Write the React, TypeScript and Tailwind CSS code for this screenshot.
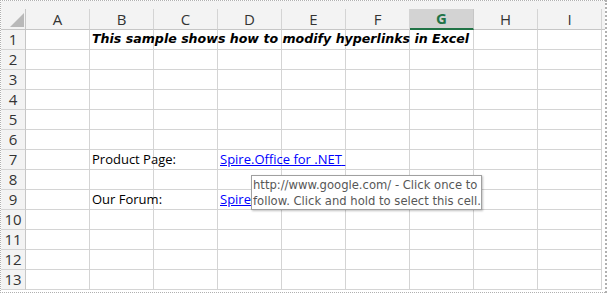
import React from "react";

const cols = ["A", "B", "C", "D", "E", "F", "G", "H", "I"];
const rows = Array.from({ length: 13 }, (_, i) => i + 1);

const cellFont = { fontFamily: '"Open Sans", "Liberation Sans", sans-serif' };

function CellContent({ r, c }: { r: number; c: number }) {
  if (r === 1 && c === 1)
    return (
      <span
        className="relative whitespace-nowrap text-[12.6px] font-bold italic text-black z-10"
        style={{ fontFamily: '"DejaVu Sans", Verdana, sans-serif' }}
      >
        This sample shows how to modify hyperlinks in Excel
      </span>
    );
  if (r === 7 && c === 1)
    return <span className="whitespace-nowrap text-[13px] text-black">Product Page:</span>;
  if (r === 9 && c === 1)
    return <span className="whitespace-nowrap text-[13px] text-black">Our Forum:</span>;
  if (r === 7 && c === 3)
    return (
      <span className="relative whitespace-nowrap text-[13px] text-[#0000ff] underline z-10">
        Spire.Office for .NET{"\u00a0"}
      </span>
    );
  if (r === 9 && c === 3)
    return <span className="whitespace-nowrap text-[13px] text-[#0000ff] underline">Spire</span>;
  return null;
}

export default function App() {
  return (
    <div
      className="relative w-[607px] h-[293px] bg-white overflow-hidden border-t border-l border-r-[2px] border-b border-dotted border-[#b0b0b0]"
      style={cellFont}
    >
      {/* top strip */}
      <div className="h-[8px] bg-[#f3f3f3]" />
      {/* header row */}
      <div className="flex h-[21px] bg-[#f3f3f3]">
        <div className="w-[25px] shrink-0 flex items-end justify-end pr-[1px] pb-[2px] border-r border-b border-[#c6c6c6]">
          <div
            className="w-[14px] h-[14px] bg-[#b9b9b9]"
            style={{ clipPath: "polygon(100% 0, 100% 100%, 0 100%)" }}
          />
        </div>
        {cols.map((c) =>
          c === "G" ? (
            <div
              key={c}
              className="w-[64px] shrink-0 flex items-center justify-center border-r border-[#c6c6c6] border-b-2 border-b-[#217346] bg-[#d3d3d3] text-[15px] font-bold text-[#217346]"
            >
              {c}
            </div>
          ) : (
            <div
              key={c}
              className="w-[64px] shrink-0 flex items-center justify-center border-r border-b border-[#d4d4d4] border-b-[#c6c6c6] text-[15px] text-[#333]"
            >
              {c}
            </div>
          )
        )}
        <div className="flex-1 border-b border-[#c6c6c6]" />
      </div>
      {/* body rows */}
      {rows.map((r) => (
        <div key={r} className="flex h-[20px]">
          <div className="w-[25px] shrink-0 flex items-center justify-center bg-[#f3f3f3] border-r border-b border-[#c6c6c6] border-b-[#d4d4d4] text-[15px] text-[#333]">
            {r}
          </div>
          {cols.map((c, ci) => (
            <div key={c} className="w-[64px] shrink-0 flex items-center pl-[2px] border-r border-b border-[#d4d4d4]">
              <CellContent r={r} c={ci} />
            </div>
          ))}
        </div>
      ))}
      {/* tooltip */}
      <div
        className="absolute left-[250px] top-[174px] w-[231px] h-[35px] z-20 bg-white border border-[#a0a0a0] px-[1px] pt-[1px] text-[11.6px] leading-[16px] text-[#575757] shadow-[1px_1px_2px_rgba(0,0,0,0.25)]"
        style={{ fontFamily: '"DejaVu Sans", Tahoma, sans-serif' }}
      >
        <div className="whitespace-nowrap">http://www.google.com/ - Click once to</div>
        <div className="whitespace-nowrap">follow. Click and hold to select this cell.</div>
      </div>
    </div>
  );
}
